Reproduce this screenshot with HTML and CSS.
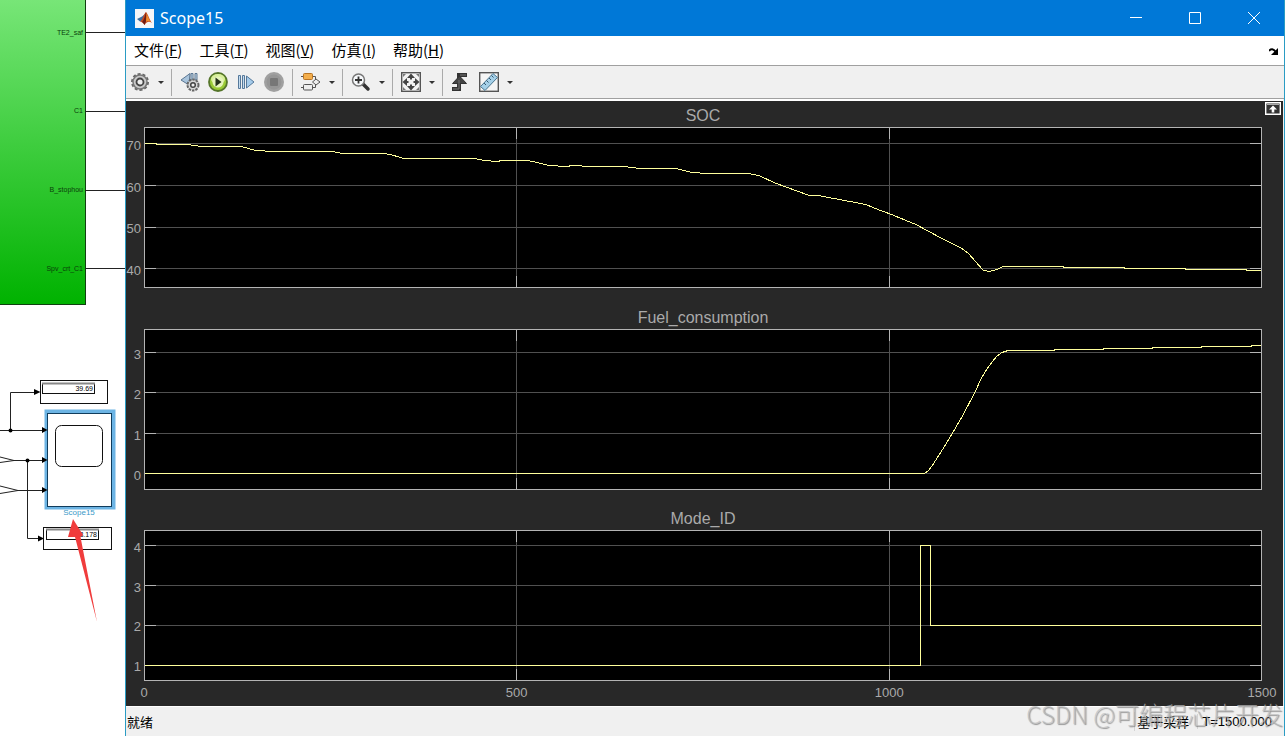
FILE: index.html
```html
<!DOCTYPE html>
<html lang="zh-CN">
<head>
  <meta charset="utf-8">
  <title>Scope15</title>
  <link rel="stylesheet" href="styles.css">
</head>
<body>
  <div class="desktop">
    <!-- Simulink model behind the scope window -->
    <svg class="model" width="125" height="736" viewBox="0 0 125 736">
      <defs>
        <linearGradient id="green" x1="0" y1="0" x2="0" y2="1">
          <stop offset="0" stop-color="#78e678"/>
          <stop offset="1" stop-color="#00b200"/>
        </linearGradient>
      </defs>
      <rect x="-2" y="-2" width="87.5" height="306.5" fill="url(#green)" stroke="#104010"/>
      <path class="wire" d="M85 32.5H125M85 111.5H125M85 190.5H125M85 268.5H125"/>
      <g class="port">
        <text x="83" y="35">TE2_saf</text>
        <text x="83" y="113">C1</text>
        <text x="83" y="192">B_stophou</text>
        <text x="83" y="271">Spv_crt_C1</text>
      </g>

      <rect class="box" x="40.5" y="380.5" width="67" height="23"/>
      <rect class="box" x="42.5" y="383.5" width="52" height="10"/>
      <path d="M42 383.5H95" stroke="#888" stroke-width="2"/>
      <text class="value" x="93" y="391">39.69</text>

      <rect x="46.5" y="411.5" width="67" height="96" fill="#fff" stroke="#6cb4e4" stroke-width="4"/>
      <rect x="47.5" y="413.5" width="64" height="93" fill="#fff" stroke="#103c5c"/>
      <rect class="box" x="55.5" y="425.5" width="47" height="41" rx="6"/>
      <text class="name" x="79" y="515">Scope15</text>

      <path class="wire" d="M0 430.5H42M10.5 430V392.5H35M13 460.5H42M27.5 460V538.5H38M17 490.5H42M0 457L14 460.5L0 462.5M0 486L18 490.5L0 493.5"/>
      <path d="M34 389L40.5 392L34 395ZM42 427L47.5 430L42 433ZM42 457L47.5 460L42 463ZM42 487L47.5 490L42 493ZM38 535.5L44 538.5L38 541.5Z"/>
      <circle cx="10.5" cy="430.5" r="2"/>
      <circle cx="27.5" cy="460.5" r="2"/>

      <rect class="box" x="43.5" y="527.5" width="68" height="22"/>
      <rect class="box" x="46.5" y="529.5" width="52" height="10"/>
      <path d="M46 529.5H99" stroke="#888" stroke-width="2"/>
      <text class="value" x="97" y="537">3.178</text>
      <path d="M73 519L83 535L80.5 537L97 622L75 537L68 537Z" fill="#f03c3c"/>
    </svg>

    <main class="window">
      <header class="titlebar">
        <svg class="logo" width="19" height="19" viewBox="0 0 19 19">
          <rect width="19" height="19" fill="#f4f6f8"/>
          <path d="M2 10L7 7.5L10 5L8 12L5 12.5Z" fill="#3c6fa0"/>
          <path d="M5 12.5C8 11 9 4 11 3C13 5 14.5 11 17 14C14 12 12 12.5 9.5 16C8.5 14 7 13 5 12.5Z" fill="#c8481c"/>
          <path d="M11 3C12 7 12 11 9.5 16C8.8 14.5 8 13.5 7 13C9 11 10 7 11 3Z" fill="#6e1d14"/>
          <path d="M11.5 4C13 7 14 11 16 13C13.5 11.5 12 12 11 13Z" fill="#f08c2c"/>
        </svg>
        <h1>Scope15</h1>
        <button class="caption" aria-label="最小化"><svg width="12" height="12"><path d="M0 5.5H12"/></svg></button>
        <button class="caption" aria-label="最大化"><svg width="12" height="12"><path d="M.5 .5H11.5V11.5H.5Z"/></svg></button>
        <button class="caption" aria-label="关闭"><svg width="12" height="12"><path d="M0 0L12 12M12 0L0 12"/></svg></button>
      </header>

      <nav class="menubar">
        <button>文件(<u>F</u>)</button>
        <button>工具(<u>T</u>)</button>
        <button>视图(<u>V</u>)</button>
        <button>仿真(<u>I</u>)</button>
        <button>帮助(<u>H</u>)</button>
        <button class="dock" aria-label="停靠"><svg width="10" height="8" viewBox="0 0 10 8"><path d="M0 3Q3-1 7 4" fill="none" stroke="#000" stroke-width="2"/><path d="M9 0V7H2Z"/></svg></button>
      </nav>

      <div class="toolbar">
        <button class="tool" aria-label="配置属性">
          <svg width="20" height="20" viewBox="0 0 20 20">
            <circle cx="10" cy="10" r="8" fill="none" stroke="#666" stroke-width="2" stroke-dasharray="3 2"/>
            <circle cx="10" cy="10" r="7" fill="#c9c9c9" stroke="#777" stroke-width="1.5"/>
            <circle cx="10" cy="10" r="3.5" fill="#eee" stroke="#444" stroke-width="1.8"/>
          </svg>
        </button>
        <button class="drop" aria-label="配置选项"></button>
        <span class="sep"></span>
        <button class="tool" aria-label="步进选项">
          <svg width="20" height="20" viewBox="0 0 20 20">
            <path d="M10 1.5L1 8L9 13Z" fill="#a9c4dc" stroke="#5a7692"/>
            <path d="M11 1.5H13V8H11ZM15 1.5H17V8H15Z" fill="#c4d8e8" stroke="#5a7692"/>
            <circle cx="13" cy="13" r="5.5" fill="#d8d8d8" stroke="#666" stroke-width="2" stroke-dasharray="2.5 1"/>
            <circle cx="13" cy="13" r="2.3" fill="#eee" stroke="#444" stroke-width="1.5"/>
          </svg>
        </button>
        <button class="tool" aria-label="运行">
          <svg width="20" height="20" viewBox="0 0 20 20">
            <circle cx="10" cy="10" r="9" fill="#9acb35" stroke="#55752a" stroke-width="1.8"/>
            <ellipse cx="10" cy="7" rx="7" ry="5" fill="#d9ef9d"/>
            <circle cx="10" cy="10" r="5.5" fill="#e6f4bb"/>
            <path d="M7.5 5.5L13.5 10L7.5 14.5Z" fill="#26331c"/>
          </svg>
        </button>
        <button class="tool" aria-label="步进">
          <svg width="20" height="20" viewBox="0 0 20 20">
            <path d="M2.5 3.5H4.5V16.5H2.5ZM6.5 3.5H8.5V16.5H6.5Z" fill="#c4dcf0" stroke="#55789a"/>
            <path d="M10.5 4L18 10L10.5 16Z" fill="#a5cbea" stroke="#55789a"/>
          </svg>
        </button>
        <button class="tool" aria-label="停止">
          <svg width="20" height="20" viewBox="0 0 20 20">
            <circle cx="10" cy="10" r="10" fill="#a0a0a0"/>
            <circle cx="10" cy="10" r="7.5" fill="#969696"/>
            <rect x="6" y="6" width="8" height="8" rx="1" fill="#777"/>
          </svg>
        </button>
        <span class="sep"></span>
        <button class="tool" aria-label="高亮模块">
          <svg width="20" height="20" viewBox="0 0 20 20">
            <path d="M0 4.500H14.5V8M0 15.5H14.5V12" fill="none" stroke="#555"/>
            <rect x="2.5" y="1.5" width="9" height="6" rx="1" fill="#f3ae4c" stroke="#b87424"/>
            <rect x="2.5" y="12.5" width="9" height="5.5" rx="1" fill="#eee" stroke="#555"/>
            <path d="M15 7L19 10L15 13L11.5 10Z" fill="#eee" stroke="#555"/>
          </svg>
        </button>
        <button class="drop" aria-label="模块选项"></button>
        <span class="sep"></span>
        <button class="tool" aria-label="放大">
          <svg width="20" height="20" viewBox="0 0 20 20">
            <path d="M12 12L17 17" stroke="#333" stroke-width="3.5" stroke-linecap="round"/>
            <circle cx="7.5" cy="8" r="6" fill="#f6f8fa" stroke="#777" stroke-width="1.5"/>
            <path d="M4 8H11M7.5 4.5V11.5" stroke="#333" stroke-width="1.8"/>
          </svg>
        </button>
        <button class="drop" aria-label="缩放选项"></button>
        <span class="sep"></span>
        <button class="tool" aria-label="缩放以适应">
          <svg width="20" height="20" viewBox="0 0 20 20">
            <rect x=".7" y=".7" width="18.6" height="18.6" fill="#f3f3f3" stroke="#555" stroke-width="1.4"/>
            <path d="M10 1.5L14 6H6ZM10 18.5L14 14H6ZM1.5 10L6 6V14ZM18.5 10L14 6V14Z" fill="#444"/>
            <path d="M2 2H5L2 5ZM18 2V5L15 2ZM2 18V15L5 18ZM18 18H15L18 15Z" fill="#777"/>
            <path d="M10 5V7.5M10 12.5V15M5 10H7.5M12.5 10H15" stroke="#444" stroke-width="2"/>
          </svg>
        </button>
        <button class="drop" aria-label="适应选项"></button>
        <span class="sep"></span>
        <button class="tool" aria-label="触发器">
          <svg width="20" height="20" viewBox="0 0 20 20">
            <path d="M1 17H8V3H16" fill="none" stroke="#333" stroke-width="4"/>
            <path d="M8.5 4L15.5 11.5H1.500Z" fill="#444" stroke="#333"/>
            <path d="M2 17H8V8M9 3H15" fill="none" stroke="#777"/>
          </svg>
        </button>
        <button class="tool" aria-label="游标测量">
          <svg width="20" height="20" viewBox="0 0 20 20">
            <rect x=".7" y=".7" width="18.6" height="18.6" fill="#f5f5f5" stroke="#555" stroke-width="1.4"/>
            <path d="M1.5 14.5L14 1.5L18.5 5.5L6 18.5Z" fill="#a5d0e8" stroke="#4a7690"/>
            <path d="M5 11L7 13M7.5 8.5L9.5 10.5M10 6L12 8M12.5 3.5L14.5 5.5" stroke="#35566c"/>
          </svg>
        </button>
        <button class="drop" aria-label="测量选项"></button>
      </div>

      <section class="scope">
        <button class="maximize" aria-label="最大化坐标区">
          <svg width="16" height="13" viewBox="0 0 16 13"><path d="M.7 .7H15.3V12.3H.7Z" fill="#333" stroke="#fff" stroke-width="1.4"/><path d="M2 2.5H14" stroke="#aaa"/><path d="M8 3.5L12 7.5H9.3V10.5H6.7V7.5H4Z" fill="#fff"/></svg>
        </button>

        <h2>SOC</h2>
        <div class="ylabels soc"><span>70</span><span>60</span><span>50</span><span>40</span></div>
        <svg class="plot" viewBox="0 0 1118 161" preserveAspectRatio="none">
          <path class="grid" d="M0 16.5H1118M0 58.5H1118M0 100.5H1118M0 141.5H1118M372.5 0V161M745.5 0V161"/>
          <path class="tick" d="M0 16.5H12M0 58.5H12M0 100.5H12M0 141.5H12M1106 16.5H1118M1106 58.5H1118M1106 100.5H1118M1106 141.5H1118M372.5 0V12M372.5 149V161M745.5 0V12M745.5 149V161"/>
          <rect class="frame" x=".5" y=".5" width="1117" height="160"/>
          <polyline class="trace" points="1,16.5 12,16.5 13,17.5 44,17.5 57,19.5 97,19.5 110,23 126,24.5 188,24.5 199,26.5 240,26.5 248,28 260,31.5 331,31.5 340,33.5 353,34.5 358,33.5 383,33.5 391,35 405,38.5 423,39.5 428,38.5 448,39.5 480,39.5 496,41.5 532,41.5 546,45 561,46.5 605,46.5 616,49 631,56 664,68 674,68.5 722,77.5 735,83 745,86.5 772,97.5 797,111 818,121.5 824,126 839,143 845,144.5 853,142.5 859,139.5 919,139.5 920,140.5 980,140.5 981,141.5 1041,141.5 1042,142.5 1102,142.5 1103,143.5 1117,143.5"/>
        </svg>

        <h2>Fuel_consumption</h2>
        <div class="ylabels fuel"><span>3</span><span>2</span><span>1</span><span>0</span></div>
        <svg class="plot" viewBox="0 0 1118 161" preserveAspectRatio="none">
          <path class="grid" d="M0 23.5H1118M0 63.5H1118M0 104.5H1118M0 144.5H1118M372.5 0V161M745.5 0V161"/>
          <path class="tick" d="M0 23.5H12M0 63.5H12M0 104.5H12M0 144.5H12M1106 23.5H1118M1106 63.5H1118M1106 104.5H1118M1106 144.5H1118M372.5 0V12M372.5 149V161M745.5 0V12M745.5 149V161"/>
          <rect class="frame" x=".5" y=".5" width="1117" height="160"/>
          <polyline class="trace" points="1,144.5 780,144.5 784,142 788,137 797,123 808,105 819,86 831,63 837,50 843,40 848,33 853,27 858,23.5 864,21.5 910,21.5 911,20.5 959,20.5 960,19.5 1008,19.5 1009,18.5 1057,18.5 1058,17.5 1107,17.5 1108,16.5 1117,16.5"/>
        </svg>

        <h2>Mode_ID</h2>
        <div class="ylabels mode"><span>4</span><span>3</span><span>2</span><span>1</span></div>
        <svg class="plot" viewBox="0 0 1118 151" preserveAspectRatio="none">
          <path class="grid" d="M0 15.5H1118M0 55.5H1118M0 95.5H1118M0 135.5H1118M372.5 0V151M745.5 0V151"/>
          <path class="tick" d="M0 15.5H12M0 55.5H12M0 95.5H12M0 135.5H12M1106 15.5H1118M1106 55.5H1118M1106 95.5H1118M1106 135.5H1118M372.5 0V12M372.5 139V151M745.5 0V12M745.5 139V151"/>
          <rect class="frame" x=".5" y=".5" width="1117" height="150"/>
          <polyline class="trace" points="1,135.5 776.5,135.5 776.5,15.5 786.5,15.5 786.5,95.5 1117,95.5"/>
        </svg>
        <div class="xlabels"><span>0</span><span>500</span><span>1000</span><span>1500</span></div>
      </section>

      <footer class="statusbar">
        <span class="ready">就绪</span>
        <span class="cell">基于采样</span>
        <span class="cell time">T=1500.000</span>
      </footer>
    </main>
    <div class="watermark">CSDN @可编程芯片开发</div>
  </div>
</body>
</html>
```
FILE: styles.css
```css
body {
  margin: 0;
  background: #fff;
  font-family: "Noto Sans", "Noto Sans CJK SC", sans-serif;
}
button {
  padding: 0;
  border: 0;
  background: none;
  font: inherit;
  color: inherit;
}
.desktop {
  position: relative;
  display: grid;
  grid-template-columns: 125px 1fr;
  min-height: 100vh;
  padding-right: 3px;
  box-sizing: border-box;
  overflow: hidden;
}

/* model canvas */
.model {
  font-family: "Liberation Sans", Arial, sans-serif;
  font-size: 7px;
}
.wire {
  fill: none;
  stroke: #222;
}
.box {
  fill: #fff;
  stroke: #111;
}
.port {
  text-anchor: end;
  fill: #0a400a;
}
.value {
  text-anchor: end;
}
.name {
  text-anchor: middle;
  font-size: 8px;
  fill: #3a9ac8;
}

/* window */
.window {
  display: flex;
  flex-direction: column;
  border: solid #2a9cc4;
  border-width: 0 1px;
  background: #f0f0f0;
}
.titlebar {
  display: flex;
  align-items: center;
  height: 36px;
  padding-left: 9px;
  background: #0078d7;
  color: #fff;
}
.titlebar h1 {
  flex: 1;
  margin: 0 0 0 6px;
  font-size: 16px;
  font-weight: 400;
}
.caption {
  display: flex;
  align-items: center;
  justify-content: center;
  width: 59px;
  height: 34px;
}
.caption:last-child {
  margin-right: 1px;
}
.caption path {
  fill: none;
  stroke: #fff;
}
.menubar {
  display: flex;
  align-items: flex-start;
  gap: 17px;
  height: 29px;
  padding: 0 5px 0 8px;
  border-bottom: 1px solid #a0a0a0;
  background: #fff;
  font-family: "Noto Sans CJK SC", sans-serif;
  font-size: 15px;
  line-height: 28px;
}
.dock {
  margin-left: auto;
}
.toolbar {
  display: flex;
  align-items: center;
  height: 32px;
  border-bottom: 1px solid #a0a0a0;
}
.tool {
  display: flex;
  align-items: center;
  justify-content: center;
  width: 28px;
  height: 28px;
}
.drop {
  display: flex;
  justify-content: center;
  width: 13px;
}
.drop::after {
  content: "";
  border: 3px solid transparent;
  border-top-color: #333;
  border-bottom: 0;
}
.sep {
  width: 1px;
  height: 27px;
  margin: 0 4px;
  background: #aaa;
}

/* scope axes */
.scope {
  position: relative;
  flex: 1;
  display: grid;
  grid-template-columns: 18px 1fr;
  grid-template-rows: 26px 161fr 41px 161fr 40px 151fr 25px;
  margin-right: 1px;
  padding-right: 21px;
  border-top: 2px solid #fff;
  background: #282828;
  color: #aaa;
  font-family: "Liberation Sans", Arial, sans-serif;
  font-size: 13px;
}
.scope h2 {
  grid-column: 2;
  align-self: end;
  margin: 0;
  font-size: 16px;
  font-weight: 400;
  line-height: 22px;
  text-align: center;
}
.ylabels {
  display: flex;
  flex-direction: column;
  justify-content: space-between;
  padding-right: 3px;
  line-height: 16px;
  text-align: right;
}
.soc {
  padding-top: 11px;
  padding-bottom: 9px;
}
.fuel {
  padding-top: 18px;
  padding-bottom: 6px;
}
.mode {
  padding-top: 10px;
  padding-bottom: 6px;
}
.plot {
  width: 100%;
  height: 100%;
  min-height: 0;
  background: #000;
}
.plot path, .plot rect, .plot polyline {
  fill: none;
  shape-rendering: crispEdges;
  vector-effect: non-scaling-stroke;
}
.plot .grid {
  stroke: #505050;
}
.plot .tick, .plot .frame {
  stroke: #b4b4b4;
}
.plot .trace {
  stroke: #ffff9c;
}
.xlabels {
  grid-column: 2;
  display: flex;
  justify-content: space-between;
  margin: 0 -22px;
  line-height: 24px;
}
.xlabels span {
  width: 44px;
  text-align: center;
}
.maximize {
  position: absolute;
  top: 1px;
  right: 2px;
}
.maximize svg {
  display: block;
}

.statusbar {
  display: flex;
  align-items: center;
  height: 29px;
  padding-right: 10px;
  border-top: 1px solid #fff;
  color: #000;
  font-family: "Liberation Sans", "Noto Sans CJK SC", sans-serif;
  font-size: 13px;
}
.ready {
  flex: 1;
  padding-left: 1px;
}
.cell {
  padding: 0 8px 0 2px;
  border-left: 1px solid #d4d4d4;
}
.time {
  padding: 0 2px 0 4px;
}
.watermark {
  position: absolute;
  right: 5px;
  bottom: 5px;
  font-family: "Noto Sans CJK SC", sans-serif;
  font-size: 24px;
  font-weight: 300;
  line-height: 34px;
  white-space: nowrap;
  color: rgba(190, 190, 190, 0.7);
  text-shadow: 1px 1px 1px rgba(90, 90, 90, 0.6);
}
```
